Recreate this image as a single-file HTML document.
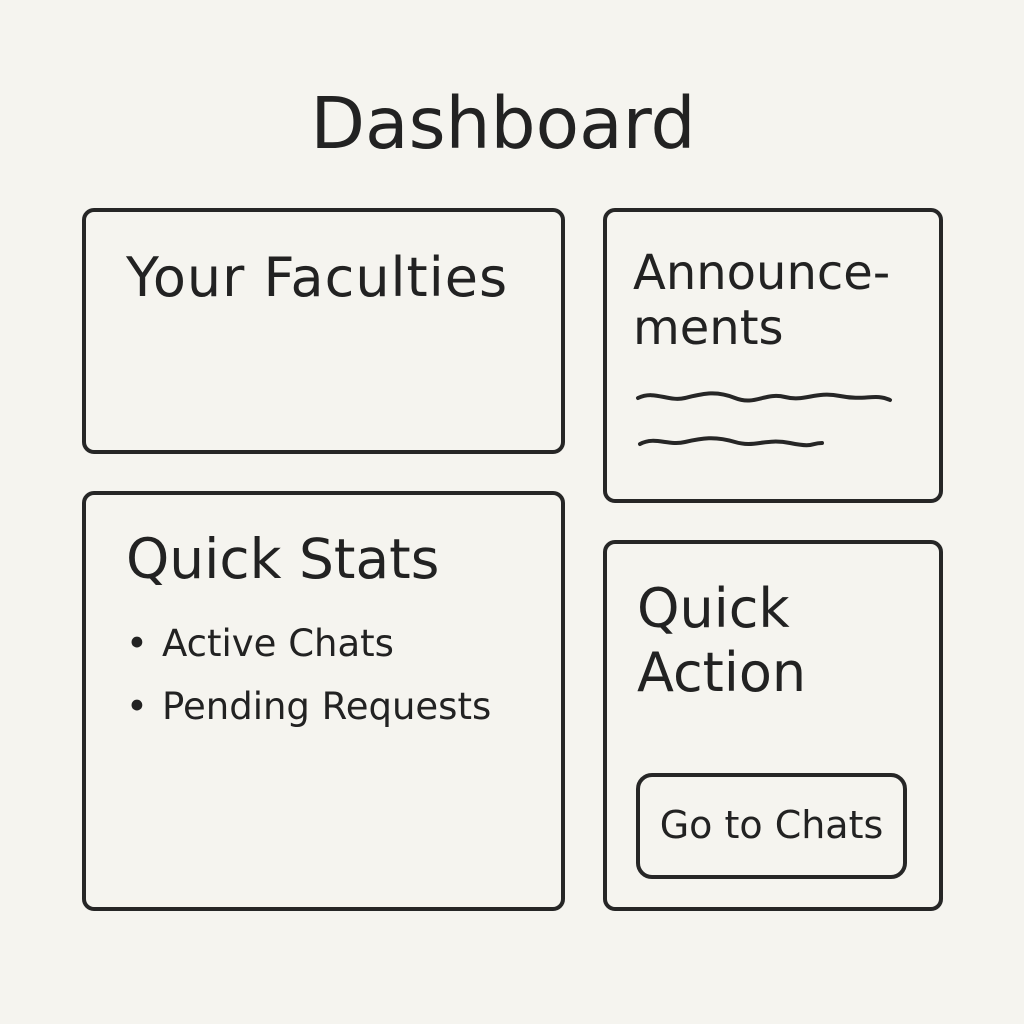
<!DOCTYPE html>
<html><head><meta charset="utf-8"><style>
html,body{margin:0;padding:0;}
body{width:1024px;height:1024px;background:#f5f4ef;position:relative;overflow:hidden;font-family:"DejaVu Sans","Liberation Sans",sans-serif;color:#222;}
.box{position:absolute;border:4px solid #262626;border-radius:12px;box-sizing:border-box;}
.t{position:absolute;white-space:nowrap;color:#222;line-height:1;}
</style></head><body>
<div class="t" style="left:0;width:1006px;text-align:center;top:88px;font-size:71px;">Dashboard</div>

<div class="box" style="left:82px;top:208px;width:483px;height:246px;"></div>
<div class="t" style="left:126px;top:251px;font-size:54px;letter-spacing:1px;">Your Faculties</div>

<div class="box" style="left:603px;top:208px;width:340px;height:295px;"></div>
<div class="t" style="left:633px;top:249px;font-size:48px;">Announce-</div>
<div class="t" style="left:633px;top:304px;font-size:48px;">ments</div>
<svg style="position:absolute;left:0;top:0" width="1024" height="1024">
<path d="M638 398 C655 390,668 402,685 398 S715 390,735 398 S765 392,785 397 S815 391,840 396 S875 393,890 400" fill="none" stroke="#262626" stroke-width="4" stroke-linecap="round"/>
<path d="M640 444 C655 436,668 446,685 442 S715 436,735 442 S765 438,790 443 S810 443,822 443" fill="none" stroke="#262626" stroke-width="4" stroke-linecap="round"/>
</svg>

<div class="box" style="left:82px;top:491px;width:483px;height:420px;"></div>
<div class="t" style="left:126px;top:532px;font-size:55px;">Quick Stats</div>
<div class="t" style="left:126px;top:625px;font-size:37px;">•</div>
<div class="t" style="left:162px;top:625px;font-size:37px;">Active Chats</div>
<div class="t" style="left:126px;top:688px;font-size:37px;">•</div>
<div class="t" style="left:162px;top:688px;font-size:37px;">Pending Requests</div>

<div class="box" style="left:603px;top:540px;width:340px;height:371px;"></div>
<div class="t" style="left:637px;top:582px;font-size:54px;">Quick</div>
<div class="t" style="left:637px;top:646px;font-size:54px;">Action</div>
<div class="box" style="left:636px;top:773px;width:271px;height:106px;border-radius:16px;"></div>
<div class="t" style="left:636px;top:806px;width:271px;text-align:center;font-size:38px;">Go to Chats</div>
</body></html>
